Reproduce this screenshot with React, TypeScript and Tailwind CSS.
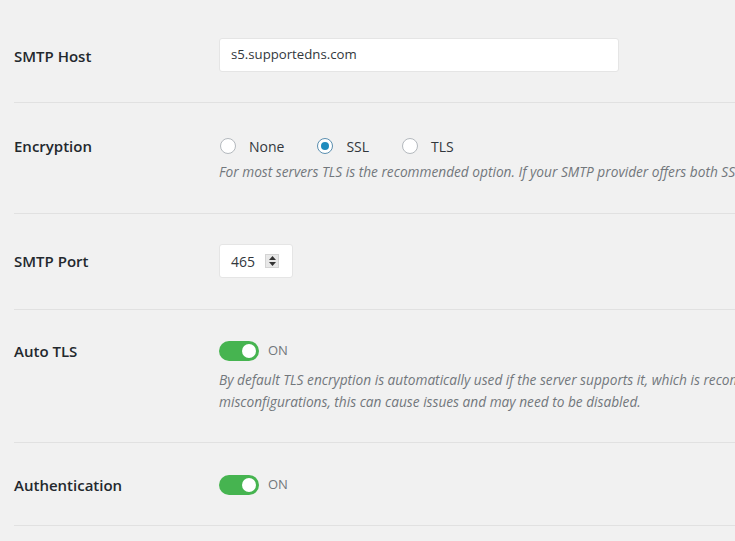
import React from "react";

const font = { fontFamily: '"Open Sans", "Noto Sans", sans-serif' };

function Label({ children, lh }: { children: React.ReactNode; lh: string }) {
  return (
    <div className={`w-[205px] shrink-0 text-[15px] font-semibold text-[#23282d] ${lh}`}>{children}</div>
  );
}

function Radio({ checked, label }: { checked?: boolean; label: string }) {
  return (
    <div className="flex items-center">
      <span
        className={`flex h-[16px] w-[16px] items-center justify-center rounded-full border bg-white ${
          checked ? "border-[#5b8fb0]" : "border-[#b4b9be]"
        }`}
      >
        {checked && <span className="h-[8px] w-[8px] rounded-full bg-[#1e8cbe]" />}
      </span>
      <span className="ml-[13px] text-[14px] text-[#32373c]">{label}</span>
    </div>
  );
}

function Toggle() {
  return (
    <div className="flex items-center">
      <span className="flex h-[20px] w-[40px] items-center justify-end rounded-full bg-[#46b450] pr-[3px]">
        <span className="h-[14px] w-[14px] rounded-full bg-white" />
      </span>
      <span className="ml-[9px] text-[13px] text-[#72777c]">ON</span>
    </div>
  );
}

export default function App() {
  return (
    <div className="h-[541px] w-[735px] overflow-hidden bg-[#f1f1f1]" style={font}>
      <div className="ml-[14px]">
        <div className="flex border-b border-[#e1e1e1] pb-[30px] pt-[38px]">
          <Label lh="leading-[32px] pt-[2px]">SMTP Host</Label>
          <div className="flex h-[34px] w-[400px] items-center rounded-[3px] border border-[#e5e5e5] bg-white pl-[11px] text-[13.2px] text-[#32373c]">
            s5.supportedns.com
          </div>
        </div>

        <div className="flex border-b border-[#e1e1e1] pb-[30px] pt-[33px]">
          <Label lh="leading-[20px]">Encryption</Label>
          <div className="whitespace-nowrap">
            <div className="flex h-[20px] items-center gap-[33px] pl-[1px]">
              <Radio label="None" />
              <Radio checked label="SSL" />
              <Radio label="TLS" />
            </div>
            <div className="mt-[5px] text-[13.7px] italic leading-[22px] text-[#72777c]">
              For most servers TLS is the recommended option. If your SMTP provider offers both SSL and TLS options, we recommend using TLS.
            </div>
          </div>
        </div>

        <div className="flex border-b border-[#e1e1e1] pb-[31px] pt-[30px]">
          <Label lh="leading-[34px]">SMTP Port</Label>
          <div className="flex h-[34px] w-[74px] items-center rounded-[3px] border border-[#e5e5e5] bg-white pl-[11px] text-[14px] text-[#32373c]">
            <span>465</span>
            <span className="ml-[10px] flex h-[14px] w-[14px] flex-col items-center justify-center gap-[2px] border border-[#d4d4d4] bg-[#e8e8e8]">
              <svg width="7" height="4" viewBox="0 0 7 4"><path d="M0 4 L3.5 0 L7 4 Z" fill="#333" /></svg>
              <svg width="7" height="4" viewBox="0 0 7 4"><path d="M0 0 L3.5 4 L7 0 Z" fill="#333" /></svg>
            </span>
          </div>
        </div>

        <div className="flex border-b border-[#e1e1e1] pb-[29px] pt-[31px]">
          <Label lh="leading-[20px]">Auto TLS</Label>
          <div className="whitespace-nowrap">
            <Toggle />
            <div className="mt-[8px] text-[13.7px] italic leading-[22px] text-[#72777c]">
              By default TLS encryption is automatically used if the server supports it, which is recommended. In some cases, due to server
              <br />
              misconfigurations, this can cause issues and may need to be disabled.
            </div>
          </div>
        </div>

        <div className="flex border-b border-[#e1e1e1] pb-[30px] pt-[32px]">
          <Label lh="leading-[20px]">Authentication</Label>
          <Toggle />
        </div>
      </div>
    </div>
  );
}
